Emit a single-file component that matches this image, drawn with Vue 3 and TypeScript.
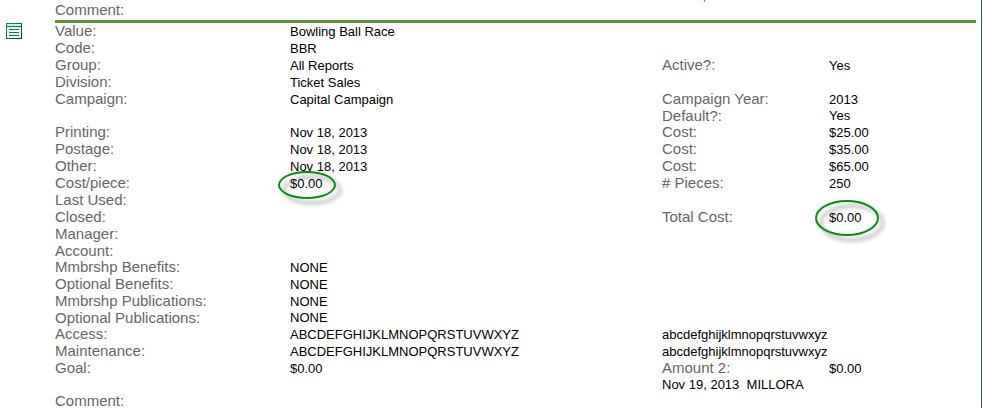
<script setup lang="ts">
interface Row {
  label?: string
  value?: string
  sideLabel?: string
  sideValue?: string
  sideText?: string
  mark?: 'value' | 'side'
}

const alphabet = 'ABCDEFGHIJKLMNOPQRSTUVWXYZ'

const groups: Row[][] = [
  [
    { label: 'Value:', value: 'Bowling Ball Race' },
    { label: 'Code:', value: 'BBR' },
    { label: 'Group:', value: 'All Reports', sideLabel: 'Active?:', sideValue: 'Yes' },
    { label: 'Division:', value: 'Ticket Sales' },
    { label: 'Campaign:', value: 'Capital Campaign', sideLabel: 'Campaign Year:', sideValue: '2013' },
    { sideLabel: 'Default?:', sideValue: 'Yes' },
  ],
  [
    { label: 'Printing:', value: 'Nov 18, 2013', sideLabel: 'Cost:', sideValue: '$25.00' },
    { label: 'Postage:', value: 'Nov 18, 2013', sideLabel: 'Cost:', sideValue: '$35.00' },
    { label: 'Other:', value: 'Nov 18, 2013', sideLabel: 'Cost:', sideValue: '$65.00' },
    { label: 'Cost/piece:', value: '$0.00', sideLabel: '# Pieces:', sideValue: '250', mark: 'value' },
    { label: 'Last Used:' },
    { label: 'Closed:', sideLabel: 'Total Cost:', sideValue: '$0.00', mark: 'side' },
    { label: 'Manager:' },
    { label: 'Account:' },
  ],
  [
    { label: 'Mmbrshp Benefits:', value: 'NONE' },
    { label: 'Optional Benefits:', value: 'NONE' },
    { label: 'Mmbrshp Publications:', value: 'NONE' },
    { label: 'Optional Publications:', value: 'NONE' },
  ],
  [
    { label: 'Access:', value: alphabet, sideText: alphabet.toLowerCase() },
    { label: 'Maintenance:', value: alphabet, sideText: alphabet.toLowerCase() },
    { label: 'Goal:', value: '$0.00', sideLabel: 'Amount 2:', sideValue: '$0.00' },
    { sideText: 'Nov 19, 2013\u00a0 MILLORA' },
  ],
]
</script>

<template>
  <main class="report">
    <div class="gutter">
      <button class="open" type="button" aria-label="Open record">
        <svg width="16" height="16" viewBox="0 0 16 16" aria-hidden="true">
          <defs>
            <linearGradient id="ink" x1="0" y1="0" x2="1" y2="1">
              <stop offset="0" stop-color="#12947a" />
              <stop offset="1" stop-color="#083c2c" />
            </linearGradient>
          </defs>
          <rect width="16" height="16" fill="url(#ink)" />
          <rect x="1" y="1" width="14" height="2" fill="#d5ebe6" />
          <rect x="1" y="4" width="14" height="11" fill="#eef5f3" />
          <path d="M3 6h10v1H3zM3 9h10v1H3zM3 12h10v1H3z" fill="#107460" />
        </svg>
      </button>
    </div>
    <div class="content">
      <div class="previous">
        <svg class="tail" width="3" height="2" viewBox="0 0 3 2" aria-hidden="true">
          <path d="M2 0L1 2" stroke="#666" fill="none" />
        </svg>
        <p class="comment">Comment:</p>
      </div>
      <table class="record">
        <colgroup>
          <col class="col-label" />
          <col />
          <col class="col-side" />
          <col class="col-end" />
        </colgroup>
        <tbody v-for="(group, g) in groups" :key="g">
          <tr v-for="(row, r) in group" :key="r">
            <th scope="row">{{ row.label }}</th>
            <td><span :class="{ mark: row.mark === 'value' }">{{ row.value }}</span></td>
            <td v-if="row.sideText" colspan="2">{{ row.sideText }}</td>
            <template v-else>
              <th>{{ row.sideLabel }}</th>
              <td><span :class="{ mark: row.mark === 'side', large: row.mark === 'side' }">{{ row.sideValue }}</span></td>
            </template>
          </tr>
        </tbody>
      </table>
      <p class="comment">Comment:</p>
    </div>
  </main>
</template>

<style>
body {
  background: #fff;
}
</style>

<style scoped>
.report {
  display: flex;
  box-sizing: border-box;
  min-height: 100vh;
  margin-right: 3px;
  padding-right: 5px;
  border-right: 1px solid #1d6b5e;
  font-family: "Liberation Sans", Arial, sans-serif;
  font-size: 13px;
  line-height: 17px;
  color: #000;
}

.gutter {
  flex: none;
  box-sizing: border-box;
  width: 55px;
  padding: 23px 0 0 6px;
}

.open {
  display: block;
  padding: 0;
  border: 0;
  background: none;
  cursor: pointer;
}

.open svg {
  display: block;
}

.content {
  flex: 1;
  min-width: 0;
}

.previous {
  padding-bottom: 3px;
  border-bottom: 3px solid #60943b;
}

.tail {
  display: block;
  margin-left: auto;
  margin-right: 270px;
}

.comment {
  margin: 0;
  font-size: 15px;
  line-height: 15px;
  color: #66666a;
}

.record {
  width: 100%;
  table-layout: fixed;
  border-collapse: collapse;
}

.col-label {
  width: 235px;
}

.col-side {
  width: 167px;
}

.col-end {
  width: 147px;
}

tr {
  height: 17px;
}

tr:last-child {
  height: 16px;
  line-height: 16px;
}

th,
td {
  padding: 0;
  text-align: left;
  vertical-align: top;
  white-space: nowrap;
}

th {
  font-size: 15px;
  font-weight: normal;
  line-height: 15px;
  color: #66666a;
}

.mark {
  position: relative;
}

.mark::after {
  content: "";
  position: absolute;
  box-sizing: border-box;
  left: -12px;
  top: -5px;
  width: 58px;
  height: 28px;
  border: 2px solid #0c8a14;
  border-radius: 50%;
  filter: drop-shadow(5px 5px 2px rgba(0, 0, 0, 0.4));
}

.mark.large::after {
  left: -14px;
  top: -10px;
  width: 64px;
  height: 36px;
}
</style>
